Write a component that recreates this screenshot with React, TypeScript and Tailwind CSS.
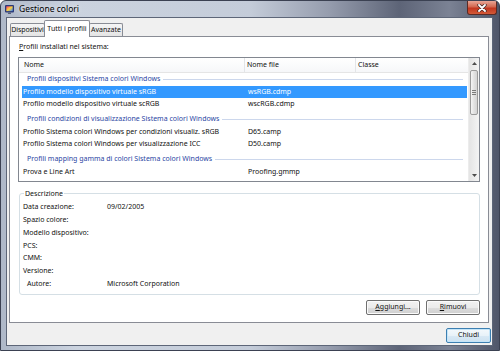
import React from "react";

type Item =
  | { kind: "group"; label: string; h: string }
  | { kind: "row"; name: string; file: string; selected?: boolean };

const ITEMS: Item[] = [
  { kind: "group", label: "Profili dispositivi Sistema colori Windows", h: "h-[13px]" },
  { kind: "row", name: "Profilo modello dispositivo virtuale sRGB", file: "wsRGB.cdmp", selected: true },
  { kind: "row", name: "Profilo modello dispositivo virtuale scRGB", file: "wscRGB.cdmp" },
  { kind: "group", label: "Profili condizioni di visualizzazione Sistema colori Windows", h: "h-[16px] pt-[2px]" },
  { kind: "row", name: "Profilo Sistema colori Windows per condizioni visualiz. sRGB", file: "D65.camp" },
  { kind: "row", name: "Profilo Sistema colori Windows per visualizzazione ICC", file: "D50.camp" },
  { kind: "group", label: "Profili mapping gamma di colori Sistema colori Windows", h: "h-[16px] pt-[2px]" },
  { kind: "row", name: "Prova e Line Art", file: "Proofing.gmmp" },
  { kind: "row", name: "Fotografia", file: "Photo.gmmp" },
];

const DETAILS: [string, string][] = [
  ["Data creazione:", "09/02/2005"],
  ["Spazio colore:", ""],
  ["Modello dispositivo:", ""],
  ["PCS:", ""],
  ["CMM:", ""],
  ["Versione:", ""],
];

function Btn({ children, w, def }: { children: React.ReactNode; w: string; def?: boolean }) {
  return (
    <div
      className={`${w} h-[15px] flex items-center justify-center rounded-[2px] border ${
        def
          ? "border-[#3c7fb1] shadow-[inset_0_0_0_1px_#c4e5f9] bg-[linear-gradient(#f4f9fc_0%,#e8f2f9_50%,#d9e9f5_51%,#cde2f1_100%)]"
          : "border-[#707070] shadow-[inset_0_0_0_1px_#fbfbfb] bg-[linear-gradient(#f2f2f2_0%,#ebebeb_50%,#dddddd_51%,#cfcfcf_100%)]"
      }`}
    >
      {children}
    </div>
  );
}

function Arrow({ up }: { up?: boolean }) {
  return (
    <svg width="5" height="3" viewBox="0 0 5 3">
      <path d={up ? "M0 3 L2.5 0 L5 3Z" : "M0 0 L2.5 3 L5 0Z"} fill="#4d4d4d" />
    </svg>
  );
}

export default function App() {
  return (
    <div className="w-[500px] h-[351px] overflow-hidden relative flex flex-col border border-[#3b4152] rounded-t-[6px] bg-[linear-gradient(90deg,#aeb8c8_0%,#cbd3df_15%,#c4ccd9_50%,#959cad_66%,#5d6477_80%,#7b8294_90%,#4f5669_100%)] font-['Noto_Sans',sans-serif] text-[7px] text-[#111]">
      {/* title bar */}
      <div className="h-[16px] shrink-0 flex items-center pl-[4px] gap-[5px]">
        <svg width="9" height="9" viewBox="0 0 9 9">
          <defs>
            <linearGradient id="scr" x1="0" y1="0" x2="1" y2="1">
              <stop offset="0" stopColor="#ff3b6b" />
              <stop offset="0.5" stopColor="#ffd23a" />
              <stop offset="1" stopColor="#3a8cff" />
            </linearGradient>
          </defs>
          <rect x="0" y="0" width="9" height="7.5" rx="1" fill="#2c3a78" />
          <rect x="1.3" y="1.3" width="6.4" height="4.8" fill="url(#scr)" />
          <rect x="3" y="7.5" width="3" height="1.5" fill="#56607a" />
        </svg>
        <span className="text-[8.5px] text-black [text-shadow:0_0_4px_#fff]">Gestione colori</span>
      </div>
      <div className="absolute top-0 right-[2px] w-[30px] h-[14px] rounded-b-[3px] border border-t-0 border-[#5b2a24] bg-[linear-gradient(#e9a696_0%,#d3674f_45%,#c2361f_55%,#d35a38_100%)] flex items-center justify-center">
        <svg width="10" height="8" viewBox="0 0 10 8">
          <path d="M2 1 L8 7 M8 1 L2 7" stroke="#4a2a26" strokeWidth="3.4" strokeLinecap="round" />
          <path d="M2 1 L8 7 M8 1 L2 7" stroke="#ffffff" strokeWidth="1.8" strokeLinecap="round" />
        </svg>
      </div>

      {/* client area */}
      <div className="flex-1 ml-[5px] mr-[6px] mb-[4px] border border-[#5d6678] bg-[#f0f0f0] flex flex-col min-h-0">
        {/* tabs */}
        <div className="h-[16px] mt-[2px] pl-[3px] flex items-end shrink-0">
          <div className="w-[35px] h-[13px] flex items-center justify-center border border-b-0 border-[#898c95] rounded-t-[2px] bg-[linear-gradient(#f5f5f5,#e4e4e4)] whitespace-nowrap tracking-[-0.1px]">
            Dispositivi
          </div>
          <div className="w-[46px] h-[17px] ml-[-1px] mb-[-1px] relative z-10 flex items-start pt-[3px] justify-center border border-b-0 border-[#898c95] rounded-t-[2px] bg-white whitespace-nowrap">
            Tutti i profili
          </div>
          <div className="w-[34px] h-[13px] ml-[-1px] flex items-center justify-center border border-b-0 border-[#898c95] rounded-t-[2px] bg-[linear-gradient(#f5f5f5,#e4e4e4)] whitespace-nowrap">
            Avanzate
          </div>
        </div>

        {/* tab page */}
        <div className="flex-1 ml-[2px] mr-[3px] bg-white border border-[#898c95] px-[8px] flex flex-col min-h-0">
          <div className="h-[12px] mt-[4px] pl-[1px] flex items-center">
            <span>
              <span className="underline">P</span>rofili installati nel sistema:
            </span>
          </div>

          {/* list view */}
          <div className="h-[125px] mt-[4px] border border-[#828790] flex shrink-0 overflow-hidden">
            <div className="flex-1 flex flex-col min-w-0 overflow-hidden">
              <div className="h-[15px] shrink-0 flex border-b border-[#e5e5e5] bg-[linear-gradient(#ffffff,#f6f7f9)]">
                <div className="w-[226px] pl-[5px] flex items-center border-r border-[#e3e5e8]">Nome</div>
                <div className="w-[111px] pl-[2px] flex items-center border-r border-[#e3e5e8]">Nome file</div>
                <div className="flex-1 pl-[2px] flex items-center">Classe</div>
              </div>
              <div className="pl-[3px] pr-[1px] flex flex-col">
                {ITEMS.map((it, i) =>
                  it.kind === "group" ? (
                    <div key={i} className={`${it.h} shrink-0 flex items-center pl-[5px] text-[#2b46a3]`}>
                      <span className="whitespace-nowrap">{it.label}</span>
                      <div className="flex-1 h-px ml-[3px] mr-[4px] bg-[#ccd7ec]" />
                    </div>
                  ) : (
                    <div
                      key={i}
                      className={`h-[12px] shrink-0 flex items-center whitespace-nowrap ${
                        it.selected ? "bg-[#3399ff] text-white" : ""
                      }`}
                    >
                      <div className="w-[226px] pl-[1px]">{it.name}</div>
                      <div>{it.file}</div>
                    </div>
                  )
                )}
              </div>
            </div>
            {/* scrollbar */}
            <div className="w-[11px] shrink-0 flex flex-col bg-[linear-gradient(90deg,#e4e4e4,#f4f4f4)] border-l border-[#ececec]">
              <div className="h-[11px] flex items-center justify-center">
                <Arrow up />
              </div>
              <div className="h-[45px] mt-[1px] mx-[1px] rounded-[2px] border border-[#9a9a9a] bg-[linear-gradient(90deg,#f5f5f5,#e2e2e2_50%,#d4d4d4)] flex flex-col items-center justify-center gap-[1px]">
                <div className="w-[4px] h-px bg-[#7a7a7a]" />
                <div className="w-[4px] h-px bg-[#7a7a7a]" />
                <div className="w-[4px] h-px bg-[#7a7a7a]" />
              </div>
              <div className="flex-1" />
              <div className="h-[11px] flex items-center justify-center">
                <Arrow />
              </div>
            </div>
          </div>

          {/* description group */}
          <div className="h-[102px] mt-[11px] ml-[1px] relative border border-[#d5dfe5] rounded-[3px] pt-[7px] pl-[3px] flex flex-col shrink-0">
            <span className="absolute top-[-6px] left-[4px] px-[1px] h-[12px] leading-[12px] bg-white">Descrizione</span>
            {DETAILS.map(([k, v]) => (
              <div key={k} className="h-[12.8px] flex items-center">
                <div className="w-[84px]">{k}</div>
                <div>{v}</div>
              </div>
            ))}
            <div className="h-[12.8px] flex items-center pl-[4px]">
              <div className="w-[80px]">Autore:</div>
              <div>Microsoft Corporation</div>
            </div>
          </div>

          <div className="mt-[5px] flex justify-end gap-[6px]">
            <Btn w="w-[54px]">
              <span>
                <span className="underline">A</span>ggiungi...
              </span>
            </Btn>
            <Btn w="w-[54px]">
              <span>
                <span className="underline">R</span>imuovi
              </span>
            </Btn>
          </div>
        </div>

        {/* bottom */}
        <div className="h-[22px] shrink-0 flex justify-end items-start pt-[5px] pr-[1px]">
          <Btn w="w-[45px]" def>
            Chiudi
          </Btn>
        </div>
      </div>
    </div>
  );
}
